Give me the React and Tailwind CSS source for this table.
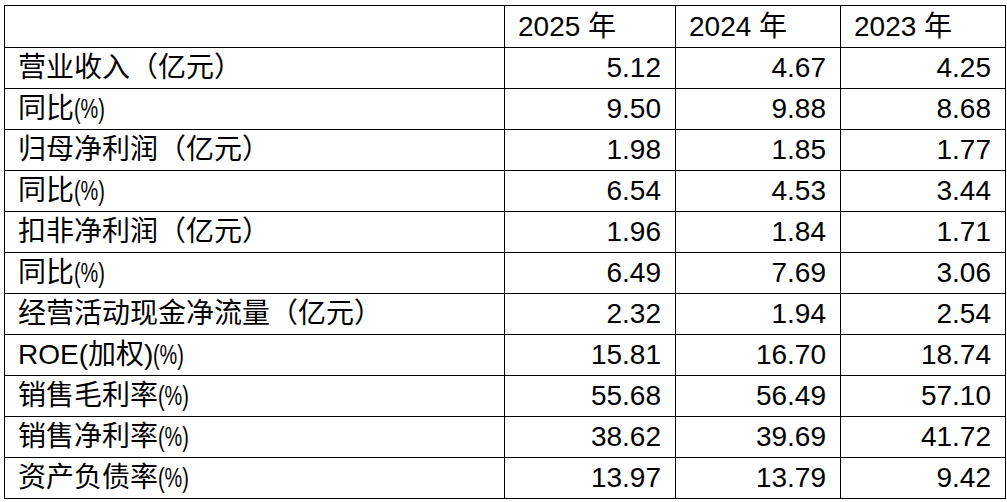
import React from 'react';

const rows = [
  ['营业收入', '5.12', '4.67', '4.25', 'yi'],
  ['同比', '9.50', '9.88', '8.68', 'pct'],
  ['归母净利润', '1.98', '1.85', '1.77', 'yi'],
  ['同比', '6.54', '4.53', '3.44', 'pct'],
  ['扣非净利润', '1.96', '1.84', '1.71', 'yi'],
  ['同比', '6.49', '7.69', '3.06', 'pct'],
  ['经营活动现金净流量', '2.32', '1.94', '2.54', 'yi'],
  ['ROE(加权)', '15.81', '16.70', '18.74', 'pct'],
  ['销售毛利率', '55.68', '56.49', '57.10', 'pct'],
  ['销售净利率', '38.62', '39.69', '41.72', 'pct'],
  ['资产负债率', '13.97', '13.79', '9.42', 'pct'],
];

const years = ['2025 年', '2024 年', '2023 年'];

// narrow "(%)" like the source sheet renders it
const Pct = () => (
  <span className="inline-block origin-left scale-x-[0.71]">(%)</span>
);

// full-width brackets kept at a whole em each
const Yi = () => (
  <>
    <span className="inline-block w-[1em] text-right">（</span>
    亿元
    <span className="inline-block w-[1em] text-left">）</span>
  </>
);

export default function App() {
  return (
    <div className="min-h-[502px] w-[1007px] bg-white pl-[4px] pt-[5px]">
      <table className="table-fixed border-collapse font-['Liberation_Sans','Noto_Sans_CJK_SC',sans-serif] text-[28px] leading-none text-black">
        <colgroup>
          <col className="w-[500px]" />
          <col className="w-[171px]" />
          <col className="w-[165px]" />
          <col className="w-[165px]" />
        </colgroup>
        <thead>
          <tr className="h-[42px]">
            <th className="border border-black" />
            {years.map((y) => (
              <th key={y} className="border border-black pl-[13px] text-left font-normal">
                {y}
              </th>
            ))}
          </tr>
        </thead>
        <tbody>
          {rows.map((r, i) => (
            <tr key={i} className="h-[41px]">
              <td className="whitespace-nowrap border border-black pl-[13px] text-left">
                {r[0]}
                {r[4] === 'pct' ? <Pct /> : <Yi />}
              </td>
              {r.slice(1, 4).map((v, j) => (
                <td key={j} className="border border-black pr-[14px] text-right">
                  {v}
                </td>
              ))}
            </tr>
          ))}
        </tbody>
      </table>
    </div>
  );
}
